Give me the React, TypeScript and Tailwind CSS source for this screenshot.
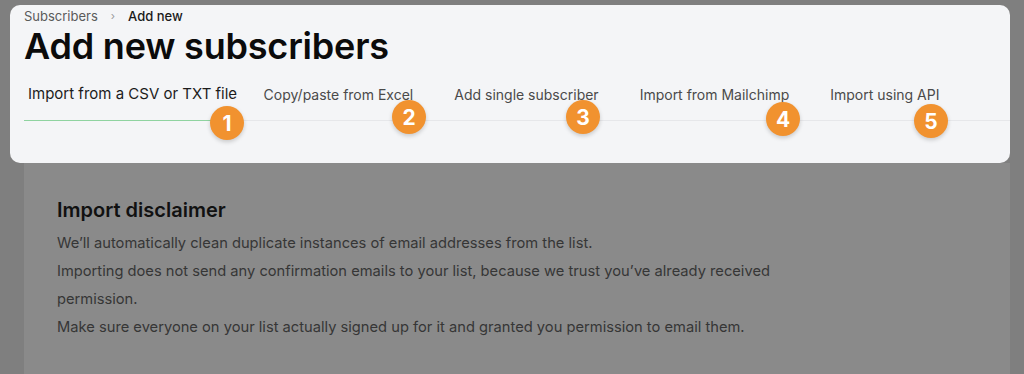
import React from "react";

const tabs = [
  "Import from a CSV or TXT file",
  "Copy/paste from Excel",
  "Add single subscriber",
  "Import from Mailchimp",
  "Import using API",
];

const badges = [
  { n: 1, left: 210, top: 106 },
  { n: 2, left: 392, top: 100 },
  { n: 3, left: 566, top: 100 },
  { n: 4, left: 766, top: 102 },
  { n: 5, left: 914, top: 104 },
];

export default function App() {
  return (
    <div
      className="relative flex h-[374px] w-[1024px] flex-col overflow-hidden bg-[#7f7f7f] pt-[5px]"
      style={{ fontFamily: "Inter, 'Noto Sans', sans-serif" }}
    >
      {/* Highlighted header card */}
      <div className="ml-[10px] h-[158px] w-[1000px] shrink-0 rounded-[10px] bg-[#f4f5f7] pl-[14px]">
        <div className="flex h-[23px] items-center text-[13px] leading-[23px]">
          <span className="text-[#5a5a5a]">Subscribers</span>
          <span className="mx-[13px] text-[11px] text-[#9a9a9a]">›</span>
          <span className="font-medium text-[#1a1a1a]">Add new</span>
        </div>
        <h1 className="text-[36px] font-semibold leading-[36px] tracking-[-0.2px] text-[#0b0b0b]">
          Add new subscribers
        </h1>
        <div className="mt-[20px] flex items-end border-b border-[#e6e7ea] leading-[20px]">
          {tabs.map((t, i) => (
            <div
              key={t}
              className={
                i === 0
                  ? "-mb-px border-b border-[#8fd3a0] pl-[4px] pr-[6px] pb-[16px] text-[15px] text-[#1c1c1c]"
                  : "px-[20.5px] pb-[15px] text-[14px] text-[#4a4a4a]"
              }
            >
              {t}
            </div>
          ))}
        </div>
      </div>

      {/* Dimmed page content */}
      <div className="ml-[24px] w-[986px] flex-1 bg-[#8a8a8a] pl-[33px] pt-[33px]">
        <h2 className="text-[20px] font-semibold leading-[28px] text-[#111111]">
          Import disclaimer
        </h2>
        <div className="mt-[5px] max-w-[740px] text-[14.7px] leading-[28px] text-[#363636]">
          <p>We’ll automatically clean duplicate instances of email addresses from the list.</p>
          <p>
            Importing does not send any confirmation emails to your list, because we trust you’ve already received
            permission.
          </p>
          <p>Make sure everyone on your list actually signed up for it and granted you permission to email them.</p>
        </div>
      </div>

      {/* Numbered annotation badges */}
      {badges.map((b) => (
        <div
          key={b.n}
          className="absolute flex h-[34px] w-[34px] items-center justify-center rounded-full bg-[#f1922f] text-[21px] font-bold leading-none text-white shadow-[0_2px_4px_rgba(0,0,0,0.18)]"
          style={{ left: b.left, top: b.top }}
        >
          {b.n}
        </div>
      ))}
    </div>
  );
}
